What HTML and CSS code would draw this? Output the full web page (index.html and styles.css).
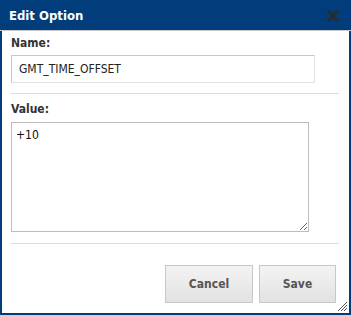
FILE: index.html
```html
<!DOCTYPE html>
<html lang="en">
<head>
	<meta charset="UTF-8">
	<title>Edit Option</title>
	<link rel="stylesheet" href="styles.css">
</head>
<body>
<div id="dialog">
    <div id="titlebar">
        <span class="title">Edit Option</span>
        <a class="close" href="javascript:void(0);">
            <svg width="12" height="12" viewBox="0 0 12 12"><path d="M2 2 L10 10 M10 2 L2 10" stroke="#2b2b2b" stroke-width="3" stroke-linecap="square"/></svg>
        </a>
    </div>
    <div id="content">
        <label class="field-label" for="optName">Name:</label>
        <input id="optName" class="text-input" type="text" value="GMT_TIME_OFFSET">
        <hr class="sep">
        <label class="field-label" for="optValue">Value:</label>
        <textarea id="optValue" class="text-area">+10</textarea>
        <hr class="sep">
        <div class="buttons">
            <button class="btn btn-cancel">Cancel</button>
            <button class="btn btn-save">Save</button>
        </div>
    </div>
    <svg class="grip" width="11" height="11" viewBox="0 0 11 11"><path d="M10 1 L1 10 M10 4 L4 10 M10 7 L7 10" stroke="#555" stroke-width="1"/></svg>
</div>
</body>
</html>
```

FILE: styles.css
```css
body {
    margin: 0;
    background: #fff;
    font-family: "DejaVu Sans Condensed", "DejaVu Sans", sans-serif;
}
#dialog {
    position: relative;
    box-sizing: border-box;
    width: 351px;
    height: 315px;
    border: 2px solid #003d7a;
    border-top: 0;
    display: flex;
    flex-direction: column;
}
#titlebar {
    height: 30px;
    margin: 0 -2px;
    padding: 0 12px 0 9px;
    background: #003d7a;
    border-bottom: 1px solid #c9c9c9;
    display: flex;
    align-items: center;
    justify-content: space-between;
}
#titlebar .title {
    color: #fff;
    font-weight: bold;
    font-size: 13px;
}
#titlebar .close {
    display: flex;
    margin-top: 1px;
}
#content {
    padding: 5px 10px 0 9px;
    display: flex;
    flex-direction: column;
}
.field-label {
    font-size: 12px;
    font-weight: bold;
    color: #333;
    line-height: 14px;
}
.text-input {
    box-sizing: border-box;
    width: 304px;
    height: 28px;
    margin: 5px 0 10px;
    padding: 0 7px;
    border: 1px solid #c8c8c8;
    border-right-color: #e2e2e2;
    border-bottom-color: #e2e2e2;
    font-family: inherit;
    font-size: 12px;
    color: #222;
}
.text-area {
    box-sizing: border-box;
    width: 298px;
    height: 110px;
    margin: 6px 0 11px;
    padding: 5px 4px;
    border: 1px solid #bdbdbd;
    font-family: inherit;
    font-size: 12px;
    color: #111;
}
.sep {
    width: 100%;
    margin: 0 0 8px;
    border: 0;
    border-top: 1px solid #dcdcdc;
}
.buttons {
    display: flex;
    justify-content: flex-end;
    gap: 6px;
    margin-top: 13px;
    padding-right: 3px;
}
.btn {
    height: 38px;
    border: 1px solid #c8c8c8;
    background: linear-gradient(#f3f3f3, #e2e2e2);
    font-family: inherit;
    font-size: 12px;
    font-weight: bold;
    color: #555;
}
.btn-cancel {
    width: 88px;
}
.btn-save {
    width: 77px;
}
.grip {
    position: absolute;
    right: 1px;
    bottom: 1px;
}
```
